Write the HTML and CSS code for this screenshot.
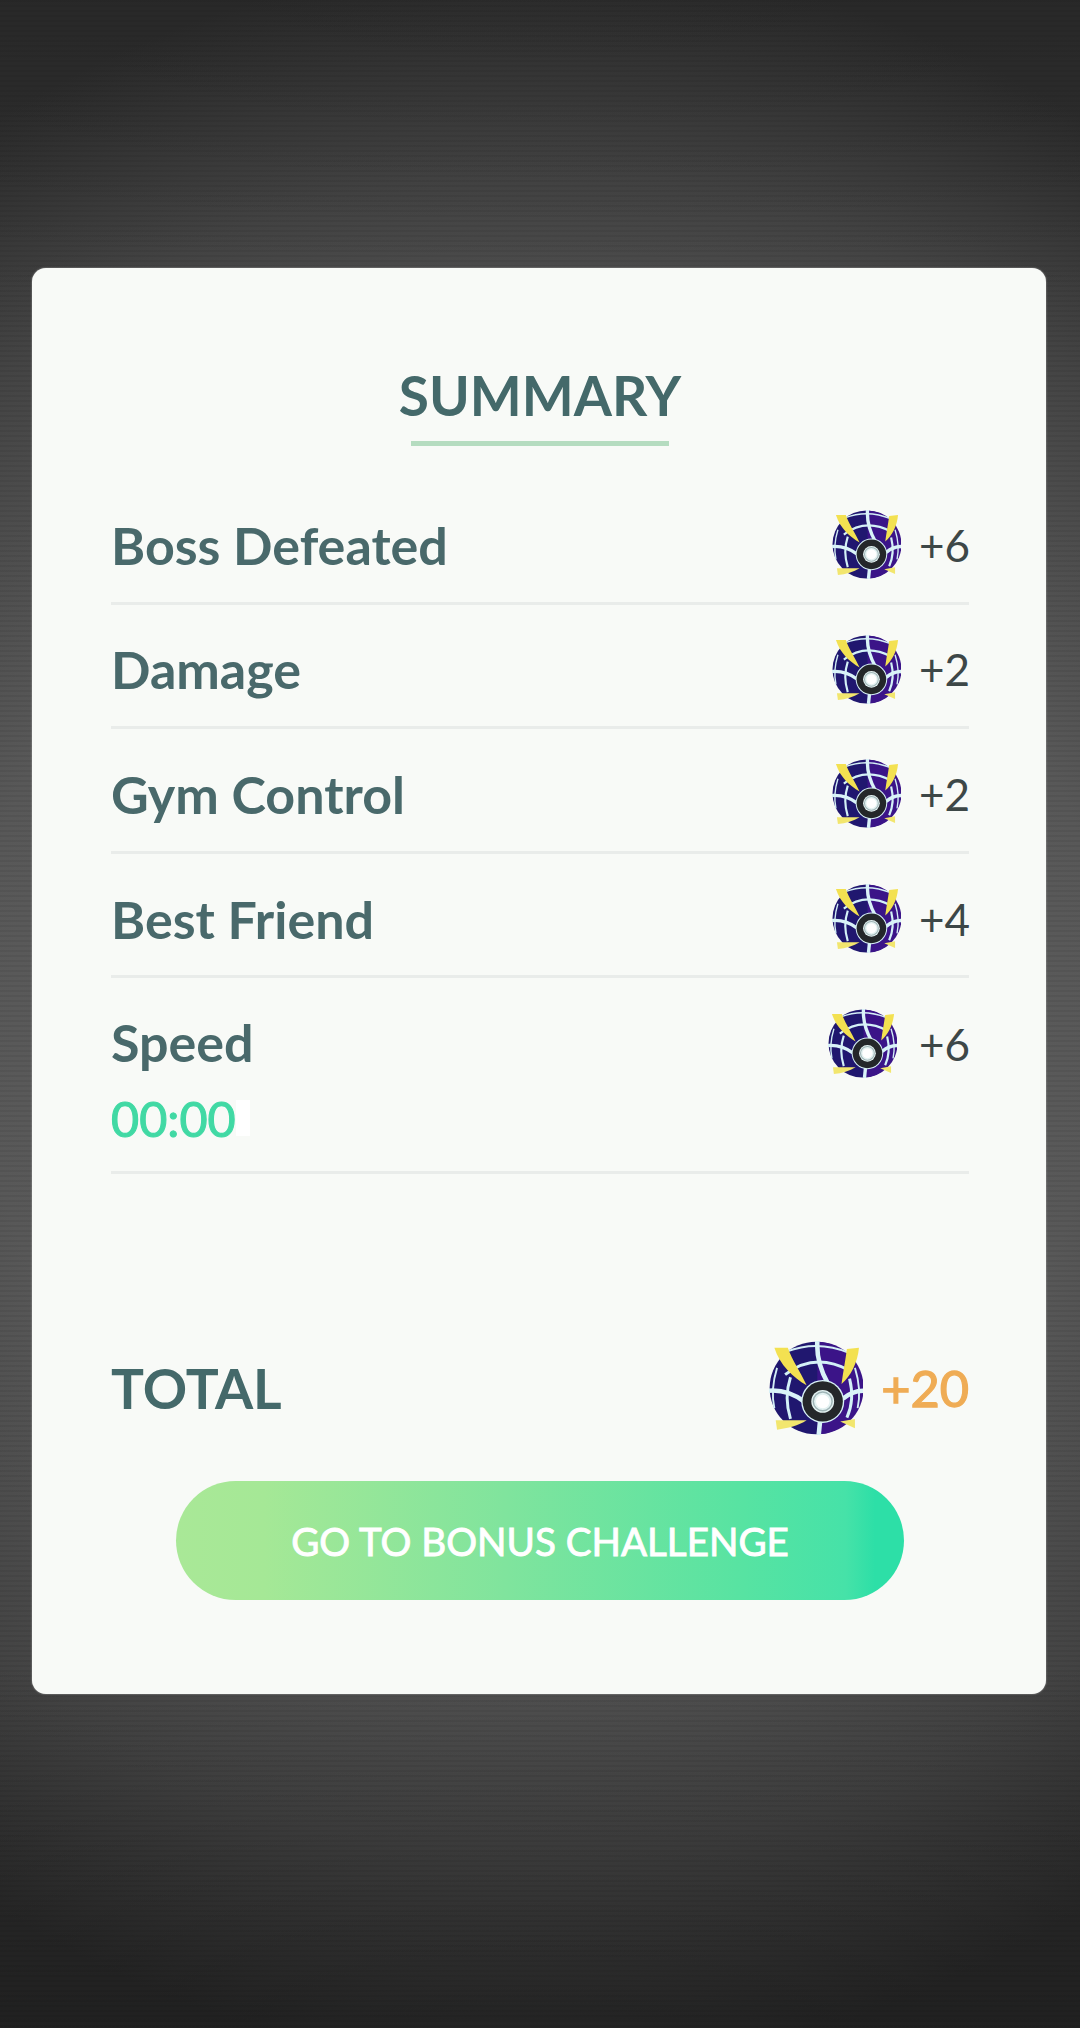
FILE: index.html
```html
<!DOCTYPE html>
<html lang="en">
  <head>
    <meta charset="UTF-8" />
    <meta name="viewport" content="width=device-width, initial-scale=1.0" />
    <title>Summary</title>
    <link rel="stylesheet" href="styles.css">
  </head>
  <body>
    <svg class="defs" width="0" height="0" aria-hidden="true">
      <symbol id="ball" viewBox="0 0 70 70">
        <circle cx="35" cy="35" r="34.5" fill="#20176f" />
        <path d="M36 .5A34.5 34.5 0 0 1 36 69.5Z" fill="#3b1488" />
        <g fill="none" stroke="#d3eef6" stroke-width="1.4">
          <path d="M13 8Q36 -1 60 9" />
          <path d="M6 20Q1 36 4 50" />
          <path d="M64 20Q69 36 66 50" />
        </g>
        <g fill="none" stroke="#d3f1f7" stroke-width="2.2">
          <path d="M12 25Q34 8 60 22" />
          <path d="M16 27Q11 42 16 58" />
          <path d="M60 28Q64 44 58 57" />
        </g>
        <g fill="none" stroke="#d9f3f8" stroke-width="3.4">
          <path d="M36 0Q35 16 44 32" />
          <path d="M0 37Q14 36 26 45" />
          <path d="M70 37Q62 37 55 43" />
          <path d="M38 60 37 70" />
        </g>
        <path d="M4 5 14 5C17 14 24 24 28 33 18 27 8 18 4 5Z" fill="#f3e151" />
        <path d="M67 5 58 6C57 14 55 24 54 32 61 26 66 16 67 5Z" fill="#f3e151" />
        <path d="M5 59 28 59C22 63 14 65 6 66Z" fill="#f2e66e" />
        <path d="M53 60 64 58 64 65Z" fill="#f2e66e" />
        <circle cx="40" cy="45" r="16" fill="#d9f3f8" />
        <circle cx="40" cy="45" r="15" fill="#24272a" />
        <circle cx="40" cy="45" r="8.5" fill="#e4f2f2" />
        <circle cx="40" cy="45" r="7" fill="none" stroke="#9fb4b6" stroke-width="1.1" />
        <circle cx="40" cy="45" r="5" fill="#fff" />
      </symbol>
    </svg>

    <div class="card">
      <div class="title-wrap">
        <h2 class="title">SUMMARY</h2>
      </div>

      <div class="rows">
        <div class="row">
          <span class="label">Boss Defeated</span>
          <div class="reward">
            <svg class="ball"><use href="#ball" /></svg>
            <span class="points">+6</span>
          </div>
        </div>
        <div class="row">
          <span class="label">Damage</span>
          <div class="reward">
            <svg class="ball"><use href="#ball" /></svg>
            <span class="points">+2</span>
          </div>
        </div>
        <div class="row">
          <span class="label">Gym Control</span>
          <div class="reward">
            <svg class="ball"><use href="#ball" /></svg>
            <span class="points">+2</span>
          </div>
        </div>
        <div class="row">
          <span class="label">Best Friend</span>
          <div class="reward">
            <svg class="ball"><use href="#ball" /></svg>
            <span class="points">+4</span>
          </div>
        </div>
        <div class="row row-speed">
          <div>
            <div class="label">Speed</div>
            <div class="time-wrap"><span class="time">00:00</span><span class="time-patch"></span></div>
          </div>
          <div class="reward reward-speed">
            <svg class="ball"><use href="#ball" /></svg>
            <span class="points">+6</span>
          </div>
        </div>
      </div>

      <div class="total">
        <span class="total-label">TOTAL</span>
        <div class="reward">
          <svg class="ball-big"><use href="#ball" /></svg>
          <span class="total-points">+20</span>
        </div>
      </div>

      <button class="go">GO TO BONUS CHALLENGE</button>
    </div>
  </body>
</html>
```

FILE: styles.css
```css
html,
body {
  height: 100%;
}

body {
  margin: 0;
  padding: 268px 34px 0 32px;
  box-sizing: border-box;
  font-family: Lato, sans-serif;
  background:
    repeating-linear-gradient(180deg, rgba(0, 0, 0, 0.06) 0, rgba(0, 0, 0, 0.06) 2px, transparent 2px, transparent 5px),
    linear-gradient(180deg, rgba(0, 0, 0, 0.12) 0, transparent 15%, transparent 82%, rgba(0, 0, 0, 0.3) 100%),
    radial-gradient(ellipse 95% 52% at 50% 50%, #666 0%, #585858 55%, #444 80%, #2e2e2e 100%);
}

.defs {
  position: absolute;
}

.card {
  height: 1426px;
  box-sizing: border-box;
  padding: 0 77px 0 79px;
  background-color: #f8faf7;
  border-radius: 14px;
  box-shadow: 0 0 2px rgba(255, 255, 255, 0.5);
}

.title-wrap {
  display: flex;
  justify-content: center;
  padding-top: 95px;
}

.title {
  margin: 0;
  padding: 0 0 14px;
  width: 258px;
  font-size: 55px;
  line-height: 64px;
  font-weight: 700;
  color: #44696a;
  border-bottom: 5px solid #b5dcc0;
  white-space: nowrap;
  display: flex;
  justify-content: center;
}

.rows {
  margin-top: 34px;
}

.row {
  display: flex;
  justify-content: space-between;
  align-items: center;
  height: 124.6px;
  box-sizing: border-box;
  padding-top: 8px;
  border-bottom: 3px solid #e9ecea;
}

.row-speed {
  height: 196px;
  align-items: flex-start;
  padding-top: 34px;
}

.label {
  font-size: 52px;
  line-height: 60px;
  font-weight: 700;
  color: #49696b;
}

.time-wrap {
  display: flex;
  align-items: center;
  margin-top: 17px;
}

.time {
  font-size: 48.5px;
  line-height: 58px;
  color: #41d9a4;
  -webkit-text-stroke: 1.1px #41d9a4;
}

.time-patch {
  width: 14px;
  height: 36px;
  background-color: #fff;
}

.reward {
  display: flex;
  align-items: center;
}

.reward-speed {
  margin-top: -3px;
}

.ball {
  width: 69px;
  height: 69px;
  margin-right: 18px;
}

.reward-speed .ball {
  margin-right: 22px;
}

.points {
  width: 50px;
  font-size: 44px;
  line-height: 60px;
  color: #3d4747;
}

.total {
  display: flex;
  justify-content: space-between;
  align-items: center;
  margin-top: 167px;
}

.total-label {
  font-size: 55px;
  line-height: 66px;
  font-weight: 700;
  color: #44696a;
}

.ball-big {
  width: 94px;
  height: 94px;
  margin-right: 18px;
}

.total-points {
  font-size: 50.5px;
  line-height: 66px;
  color: #efac55;
  -webkit-text-stroke: 1.3px #efac55;
}

.go {
  display: block;
  width: 728px;
  height: 119px;
  margin: 46px 0 0 65px;
  padding: 0;
  border: none;
  border-radius: 60px;
  background: linear-gradient(90deg, #a9e897 0%, #a5e896 12%, #80e49d 45%, #57e3a2 78%, #46e2a8 92%, #2ddfa7 96%);
  color: #fff;
  font-family: Lato, sans-serif;
  font-size: 38.6px;
  -webkit-text-stroke: 0.9px #fff;
}
```
